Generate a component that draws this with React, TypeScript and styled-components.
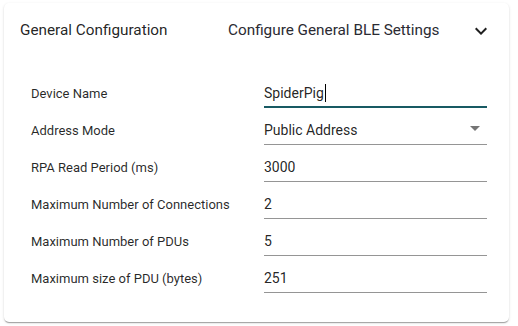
import styled, { createGlobalStyle } from 'styled-components';

const GlobalStyle = createGlobalStyle`
  body {
    margin: 0;
    background: #ffffff;
    font-family: Roboto, "Noto Sans", Arial, sans-serif;
  }
`;

type Setting = {
  label: string;
  value: string;
  focused?: boolean;
  select?: boolean;
};

const settings: Setting[] = [
  { label: 'Device Name', value: 'SpiderPig', focused: true },
  { label: 'Address Mode', value: 'Public Address', select: true },
  { label: 'RPA Read Period (ms)', value: '3000' },
  { label: 'Maximum Number of Connections', value: '2' },
  { label: 'Maximum Number of PDUs', value: '5' },
  { label: 'Maximum size of PDU (bytes)', value: '251' }
];

const App = () => {
  return (
    <>
      <GlobalStyle />
      <Page>
        <Card>
          <Header>
            <Heading>General Configuration</Heading>
            <SubHeading>Configure General BLE Settings</SubHeading>
            <ExpandIcon viewBox="0 0 24 24">
              <path d="M16.59 8.59 12 13.17 7.41 8.59 6 10l6 6 6-6z" />
            </ExpandIcon>
          </Header>
          <Form>
            {settings.map((s) => (
              <Row key={s.label}>
                <Label>{s.label}</Label>
                <Field $focused={s.focused}>
                  <Value>
                    {s.value}
                    {s.focused && <Caret />}
                  </Value>
                  {s.select && (
                    <ArrowIcon viewBox="0 0 24 24">
                      <path d="M7 10l5 5 5-5z" />
                    </ArrowIcon>
                  )}
                </Field>
              </Row>
            ))}
          </Form>
        </Card>
      </Page>
    </>
  );
};
export default App;

const Page = styled.div`
    padding: 3px 9px 4px 4px;
`;
const Card = styled.div`
    width: 505px;
    height: 319px;
    box-sizing: border-box;
    background-color: white;
    border-radius: 5px;
    box-shadow: 0px 2px 1px -1px rgba(0, 0, 0, 0.2),
        0px 1px 1px 0px rgba(0, 0, 0, 0.14),
        0px 1px 3px 0px rgba(0, 0, 0, 0.12);
`;
const Header = styled.div`
    height: 54px;
    display: flex;
    align-items: center;
    padding: 0 16px;
    box-sizing: border-box;
    color: rgba(0, 0, 0, 0.87);
`;
const Heading = styled.div`
    width: 208px;
    flex-shrink: 0;
    font-size: 15.3px;
    line-height: 20px;
`;
const SubHeading = styled(Heading)`
    width: auto;
    flex: 1;
    color: #2b2b33;
`;
const ExpandIcon = styled.svg`
    width: 24px;
    height: 24px;
    fill: #1f1f1f;
    margin-top: 2px;
`;
const Form = styled.div`
    display: flex;
    flex-direction: column;
    gap: 7px;
    padding: 21px 22px 0 27px;
`;
const Row = styled.div`
    display: grid;
    grid-template-columns: 233px 1fr;
    align-items: center;
`;
const Label = styled.div`
    font-size: 13px;
    color: rgba(0, 0, 0, 0.85);
    line-height: 18px;
    padding-top: 1px;
`;
const Field = styled.div<{ $focused?: boolean }>`
    height: 30px;
    box-sizing: border-box;
    display: flex;
    align-items: flex-start;
    padding-top: 5px;
    border-bottom: ${(p) => (p.$focused ? '2px solid #185a63' : '1px solid #959595')};
`;
const Value = styled.div`
    flex: 1;
    display: flex;
    align-items: center;
    font-size: 14px;
    line-height: 20px;
    color: rgba(0, 0, 0, 0.87);
`;
const Caret = styled.span`
    display: inline-block;
    width: 1px;
    height: 18px;
    margin-left: 1px;
    background: #000;
`;
const ArrowIcon = styled.svg`
    width: 24px;
    height: 24px;
    margin-top: -4px;
    fill: rgba(0, 0, 0, 0.54);
`;
